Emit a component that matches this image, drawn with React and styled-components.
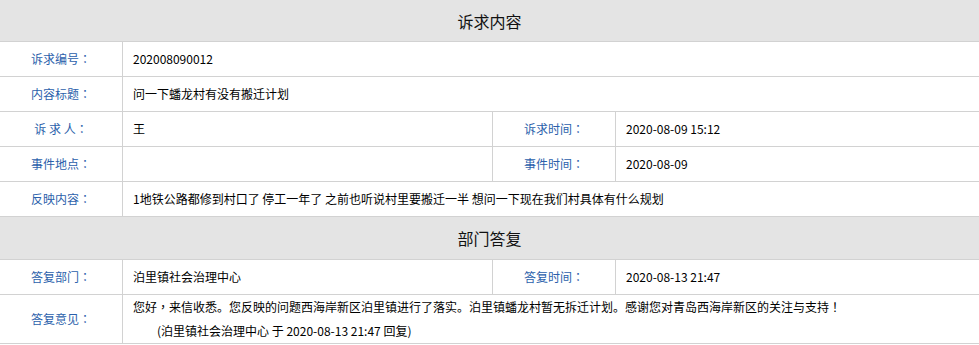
import React from "react";
import styled, { createGlobalStyle } from "styled-components";

const GlobalStyle = createGlobalStyle`
  html, body {
    margin: 0;
    padding: 0;
    background: #ffffff;
  }
  body {
    font-family: "Noto Sans CJK SC", "Microsoft YaHei", sans-serif;
    font-size: 12px;
    color: #000;
  }
`;

const Table = styled.table`
  width: 979px;
  border-collapse: separate;
  border-spacing: 0;
  table-layout: fixed;
  font-size: 12px;
`;

const SectionHeader = styled.th`
  background: #e4e4e4;
  height: ${(p) => p.$h}px;
  padding: 0;
  border-bottom: 1px solid #d2d2d2;
  font-size: 16px;
  font-weight: normal;
  color: #111;
  text-align: center;
  vertical-align: middle;
`;

const LabelCell = styled.td`
  height: 34px;
  padding: 0;
  line-height: 34px;
  color: #2b5fab;
  text-align: center;
  white-space: pre;
  border-bottom: 1px solid #d2d2d2;
  border-right: 1px solid #d2d2d2;
`;

const ValueCell = styled.td`
  height: 34px;
  padding: 0 10px;
  line-height: 34px;
  color: #000;
  text-align: left;
  border-bottom: 1px solid #d2d2d2;
  border-right: ${(p) => (p.$last ? "none" : "1px solid #d2d2d2")};
`;

const ReplyCell = styled.td`
  padding: 0 10px;
  line-height: 24px;
  color: #000;
  text-align: left;
  vertical-align: top;
  border-bottom: 1px solid #d2d2d2;
`;

const ReplySign = styled.div`
  padding-left: 24px;
`;

const Punct = styled.span`
  font-family: "Noto Sans CJK TC", "Noto Sans CJK SC", sans-serif;
`;

const Label = ({ children }) => (
  <LabelCell>
    {children}
    <Punct>：</Punct>
  </LabelCell>
);

export default function App() {
  return (
    <>
      <GlobalStyle />
      <Table>
        <colgroup>
          <col style={{ width: 123 }} />
          <col style={{ width: 370 }} />
          <col style={{ width: 123 }} />
          <col />
        </colgroup>
        <tbody>
          <tr>
            <SectionHeader colSpan={4} $h={41}>诉求内容</SectionHeader>
          </tr>
          <tr>
            <Label>诉求编号</Label>
            <ValueCell colSpan={3} $last>202008090012</ValueCell>
          </tr>
          <tr>
            <Label>内容标题</Label>
            <ValueCell colSpan={3} $last>问一下蟠龙村有没有搬迁计划</ValueCell>
          </tr>
          <tr>
            <Label>{"诉 求 人"}</Label>
            <ValueCell>王</ValueCell>
            <Label>诉求时间</Label>
            <ValueCell $last>2020-08-09 15:12</ValueCell>
          </tr>
          <tr>
            <Label>事件地点</Label>
            <ValueCell></ValueCell>
            <Label>事件时间</Label>
            <ValueCell $last>2020-08-09</ValueCell>
          </tr>
          <tr>
            <Label>反映内容</Label>
            <ValueCell colSpan={3} $last>
              1地铁公路都修到村口了 停工一年了 之前也听说村里要搬迁一半 想问一下现在我们村具体有什么规划
            </ValueCell>
          </tr>
          <tr>
            <SectionHeader colSpan={4} $h={42}>部门答复</SectionHeader>
          </tr>
          <tr>
            <Label>答复部门</Label>
            <ValueCell>泊里镇社会治理中心</ValueCell>
            <Label>答复时间</Label>
            <ValueCell $last>2020-08-13 21:47</ValueCell>
          </tr>
          <tr>
            <Label>答复意见</Label>
            <ReplyCell colSpan={3}>
              <div>
                您好<Punct>，</Punct>来信收悉。您反映的问题西海岸新区泊里镇进行了落实。泊里镇蟠龙村暂无拆迁计划。感谢您对青岛西海岸新区的关注与支持<Punct>！</Punct>
              </div>
              <ReplySign>(泊里镇社会治理中心 于 2020-08-13 21:47 回复)</ReplySign>
            </ReplyCell>
          </tr>
        </tbody>
      </Table>
    </>
  );
}
